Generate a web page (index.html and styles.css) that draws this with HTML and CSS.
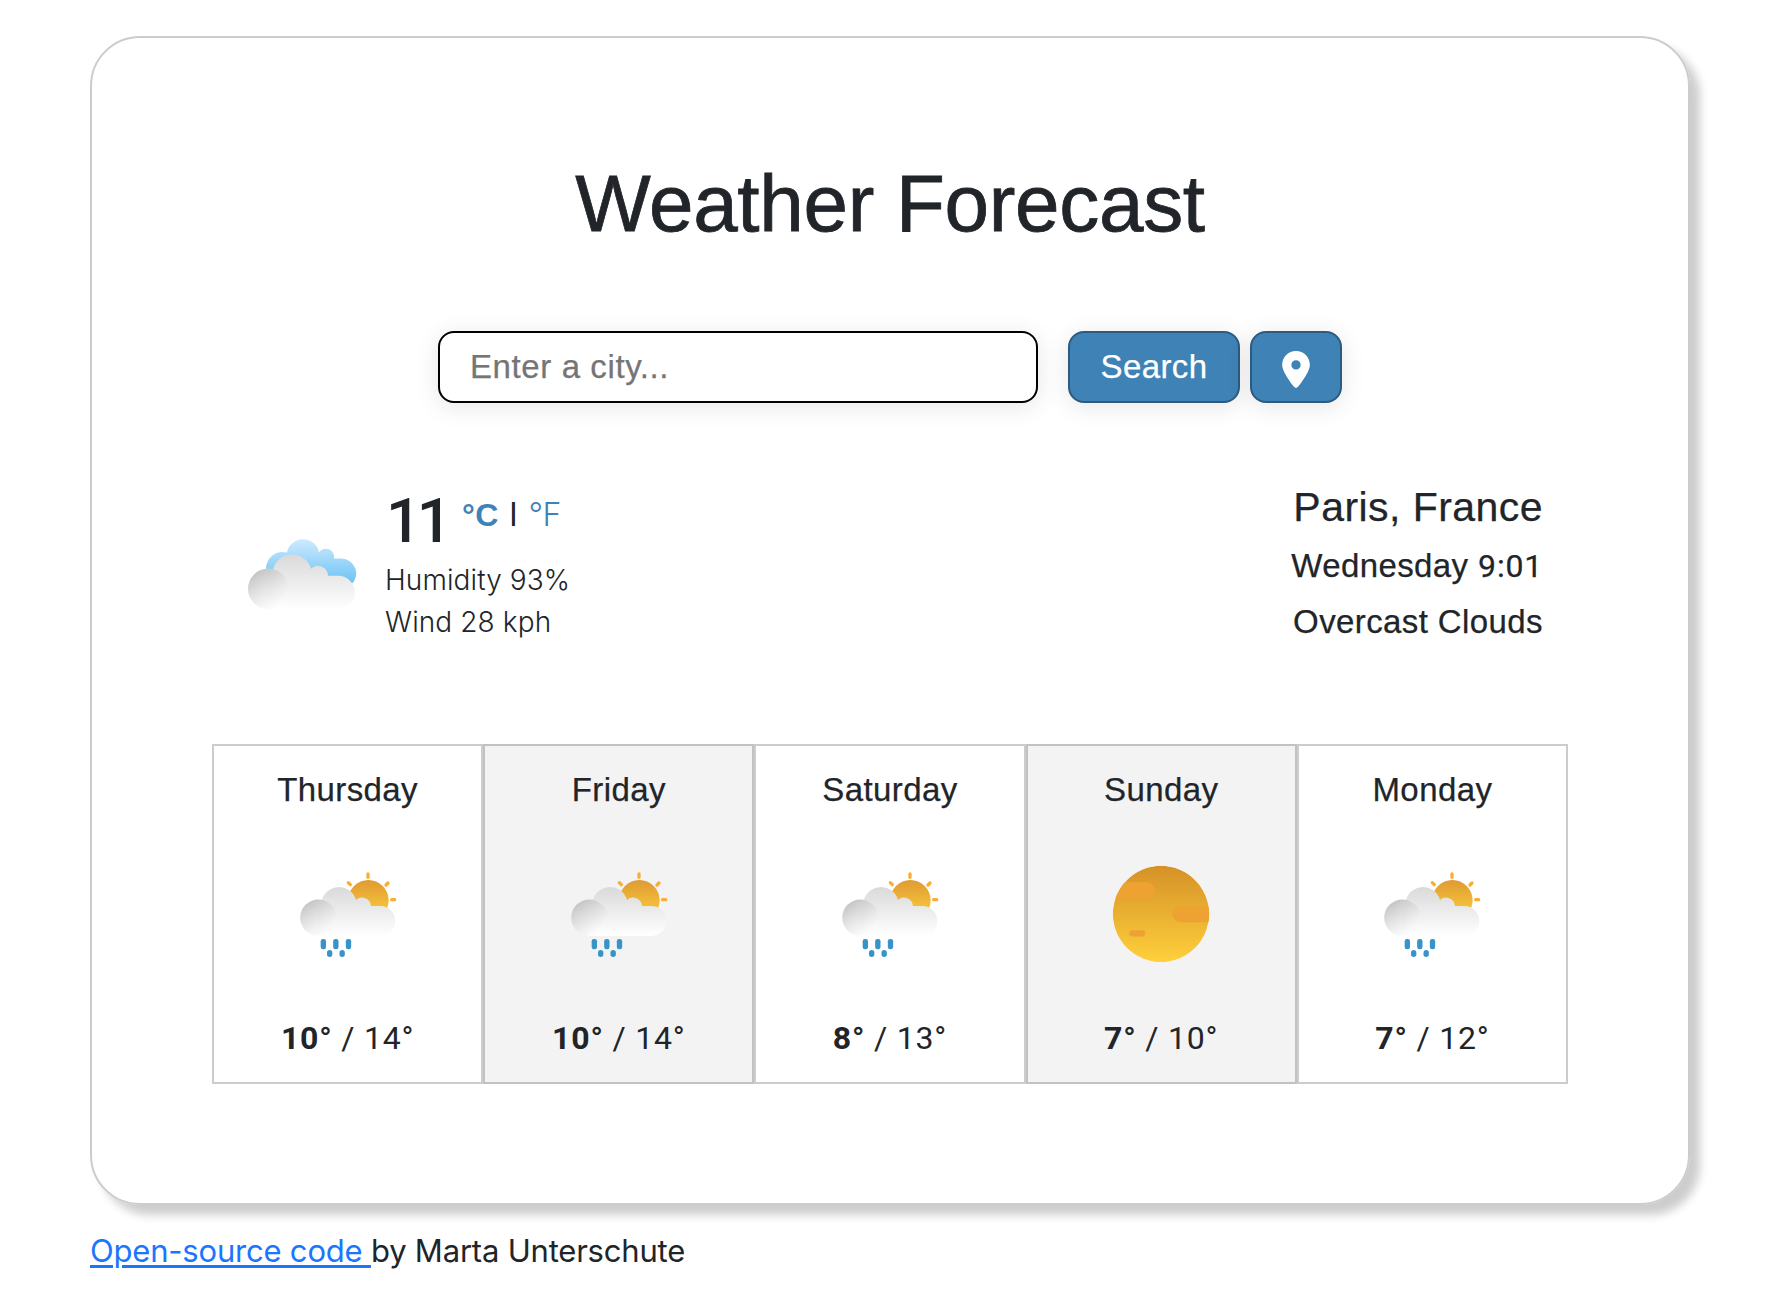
FILE: index.html
```
<!DOCTYPE html>
<html lang="en">
<head>
<meta charset="utf-8">
<title>Weather Forecast</title>
<link rel="stylesheet" href="styles.css">
</head>
<body>
<svg class="defs" aria-hidden="true">
  <defs>
    <linearGradient id="sun" x1="0" y1="0" x2="0" y2="1"><stop offset="0" stop-color="#d59127"/><stop offset="1" stop-color="#ffd03c"/></linearGradient>
    <linearGradient id="halfSun" x1="0" y1="0" x2="0" y2="1"><stop offset="0" stop-color="#df9b33"/><stop offset=".75" stop-color="#f7c43b"/></linearGradient>
    <linearGradient id="cloud" gradientUnits="userSpaceOnUse" x1="0" y1="466" x2="0" y2="615"><stop offset="0" stop-color="#d9d9d9"/><stop offset="1" stop-color="#fff"/></linearGradient>
    <linearGradient id="puff" x1=".25" y1=".1" x2=".75" y2=".95"><stop offset="0" stop-color="#c7c7c7"/><stop offset="1" stop-color="#fff" stop-opacity=".7"/></linearGradient>
    <linearGradient id="bigCloud" gradientUnits="userSpaceOnUse" x1="0" y1="220" x2="0" y2="385"><stop offset="0" stop-color="#d9d9d9"/><stop offset="1" stop-color="#fff"/></linearGradient>
    <linearGradient id="blueCloud" gradientUnits="userSpaceOnUse" x1="0" y1="175" x2="0" y2="310"><stop offset="0" stop-color="#cdeaff"/><stop offset="1" stop-color="#6cc2f3"/></linearGradient>
    <clipPath id="disc"><circle cx="452.500" cy="548.500" r="144.500"/></clipPath>
    <symbol id="rain" viewBox="293 399 300 300">
      <circle cx="504" cy="508" r="61" fill="url(#halfSun)"/>
      <path d="M503 429v10M563 456l-6 6M574 506h9M444 455l6 6" stroke="#fbac33" stroke-width="10" stroke-linecap="round"/>
      <path fill="url(#cloud)" d="M352 615V540L363 518A53 53 0 0 1 467 507A27 27 0 0 1 512 525H540A45 45 0 0 1 540 615Z"/>
      <circle cx="354" cy="560" r="54.500" fill="url(#puff)"/>
      <g fill="#3893c8"><rect x="361" y="624" width="16" height="31" rx="7"/><rect x="398.500" y="624" width="16" height="31" rx="7"/><rect x="436.500" y="624" width="16" height="31" rx="7"/><rect x="380" y="657" width="16" height="21" rx="8"/><rect x="417.500" y="657" width="16" height="21" rx="8"/></g>
    </symbol>
  </defs>
</svg>
<main class="card">
  <h1 class="title">Weather Forecast</h1>
  <form class="search">
    <input class="city-input" type="text" placeholder="Enter a city...">
    <button class="btn btn-search" type="button">Search</button>
    <button class="btn btn-pin" type="button" aria-label="Current location">
      <svg class="pin" viewBox="0 0 384 512"><path fill="#fff" d="M215.700 499.200C267 435 384 279.400 384 192 384 86 298 0 192 0S0 86 0 192c0 87.400 117 243 168.300 307.200 12.300 15.300 35.100 15.300 47.400 0zM192 128a64 64 0 1 1 0 128 64 64 0 1 1 0-128z"/></svg>
    </button>
  </form>
  <section class="current">
    <svg class="current-icon" viewBox="50 172 330 218">
      <path fill="url(#blueCloud)" d="M107 262A50 50 0 0 1 170 215A49 49 0 0 1 266 214A25 25 0 0 1 311 233H333A45 45 0 0 1 362 312L250 320L120 300Z"/>
      <path fill="url(#bigCloud)" d="M112 384V300L128 266A59 59 0 0 1 242 264A30 30 0 0 1 293 285H324A49 49 0 0 1 324 384Z"/>
      <circle cx="114" cy="324" r="61" fill="url(#puff)"/>
    </svg>
    <div class="reading">
      <div class="temp-row"><span class="temp">11</span><span class="unit unit-active">°C</span><span class="bar">l</span><span class="unit">°F</span></div>
      <div class="detail">Humidity 93%</div>
      <div class="detail">Wind 28 kph</div>
    </div>
    <div class="place">
      <div class="city">Paris, France</div>
      <div class="when">Wednesday <span class="num">9:01</span></div>
      <div class="sky">Overcast Clouds</div>
    </div>
  </section>
  <section class="forecast">
    <div class="day"><div class="name">Thursday</div><svg class="icon"><use href="#rain"/></svg><div class="range"><b>10°</b> / 14°</div></div>
    <div class="day"><div class="name">Friday</div><svg class="icon"><use href="#rain"/></svg><div class="range"><b>10°</b> / 14°</div></div>
    <div class="day"><div class="name">Saturday</div><svg class="icon"><use href="#rain"/></svg><div class="range"><b>8°</b> / 13°</div></div>
    <div class="day"><div class="name">Sunday</div><svg class="icon" viewBox="302.500 398.500 300 300"><g clip-path="url(#disc)"><circle cx="452.500" cy="548.500" r="144.500" fill="url(#sun)"/><g fill="#eda231"><rect x="280" y="453" width="154" height="49" rx="24"/><rect x="487" y="525" width="154" height="48" rx="24"/><rect x="357" y="597" width="48" height="19" rx="9"/></g></g></svg><div class="range"><b>7°</b> / 10°</div></div>
    <div class="day"><div class="name">Monday</div><svg class="icon"><use href="#rain"/></svg><div class="range"><b>7°</b> / 12°</div></div>
  </section>
</main>
<footer class="credit"><a href="#">Open-source code </a>by Marta Unterschute</footer>
</body>
</html>
```
FILE: styles.css
```
* { box-sizing: border-box; }
body {
  margin: 0;
  padding: 36px 90px 0;
  background: #fff;
  color: #212529;
  font-family: "Liberation Sans", Arial, sans-serif;
  font-size: 33px;
  letter-spacing: .4px;
}
.defs { display: block; width: 0; height: 0; }
.card {
  height: 1169px;
  padding: 120px;
  border: 2px solid #ccc;
  border-radius: 50px;
  box-shadow: 10px 10px 10px rgba(0, 0, 0, .2);
}
.title {
  margin: 0 0 82px;
  font-size: 80px;
  font-weight: 400;
  line-height: 91px;
  letter-spacing: -.3px;
  text-align: center;
  -webkit-text-stroke: .8px;
}
.search { display: flex; justify-content: center; }
.city-input, .btn {
  height: 72px;
  border-radius: 16px;
  font: inherit;
  letter-spacing: inherit;
  box-shadow: 0 4px 24px rgba(0, 0, 0, .1);
}
.city-input {
  width: 600px;
  margin-right: 30px;
  padding: 0 30px;
  border: 2px solid #000;
  background: #fff;
}
.city-input::placeholder { color: #757575; letter-spacing: .6px; }
.city-input, .btn, .place, .name { -webkit-text-stroke: .25px; }
.btn {
  display: flex;
  align-items: center;
  justify-content: center;
  padding: 0;
  border: 2px solid #2b5b80;
  background: #3f82b5;
  color: #fff;
}
.btn-search { width: 172px; margin-right: 10px; }
.btn-pin { width: 92px; }
.pin { width: 28px; height: 37px; margin-top: 5px; }
.current {
  display: flex;
  align-items: flex-start;
  height: 341px;
  padding: 77px 25px 0 35px;
}
.current-icon { width: 110px; height: 73px; margin-top: 58px; }
.reading { margin-left: 28px; }
.temp-row { display: flex; height: 79px; }
.temp {
  width: 77px;
  padding-left: 1px;
  font-family: Roboto, sans-serif;
  font-size: 62px;
  font-weight: 500;
  line-height: 82px;
  letter-spacing: -4.5px;
}
.unit {
  color: #3f82b5;
  font-family: Inter, sans-serif;
  font-size: 32px;
  font-weight: 300;
  line-height: 70px;
  letter-spacing: -.5px;
}
.unit-active {
  font-family: "Liberation Sans", Arial, sans-serif;
  font-weight: 700;
  letter-spacing: .4px;
}
.bar { margin: 0 11px 0 11px; line-height: 69px; }
.detail {
  font-family: Inter, sans-serif;
  font-size: 28px;
  font-weight: 300;
  line-height: 42px;
  letter-spacing: .1px;
}
.place { margin-left: auto; text-align: right; }
.city { margin-bottom: 4px; font-size: 41px; line-height: 54px; letter-spacing: .45px; }
.when, .sky { line-height: 55px; }
.num, .range { font-family: Roboto, sans-serif; font-size: 32px; letter-spacing: .8px; }
.forecast { display: grid; grid-template-columns: repeat(5, 1fr); }
.day {
  display: flex;
  flex-direction: column;
  align-items: center;
  height: 340px;
  padding-top: 24px;
  border: 2px solid rgba(0, 0, 0, .2);
}
.day:nth-child(even) { background: #f3f3f3; }
.name { line-height: 40px; }
.icon { width: 100px; height: 100px; margin: 54px 0 52px; }
.range { line-height: 44px; }
.credit {
  margin-top: 26px;
  font-family: Inter, sans-serif;
  font-size: 31px;
  line-height: 40px;
  letter-spacing: -.2px;
  white-space: pre;
}
.credit a { color: #1a75ff; text-decoration-thickness: 3px; text-underline-offset: 3px; }
```
